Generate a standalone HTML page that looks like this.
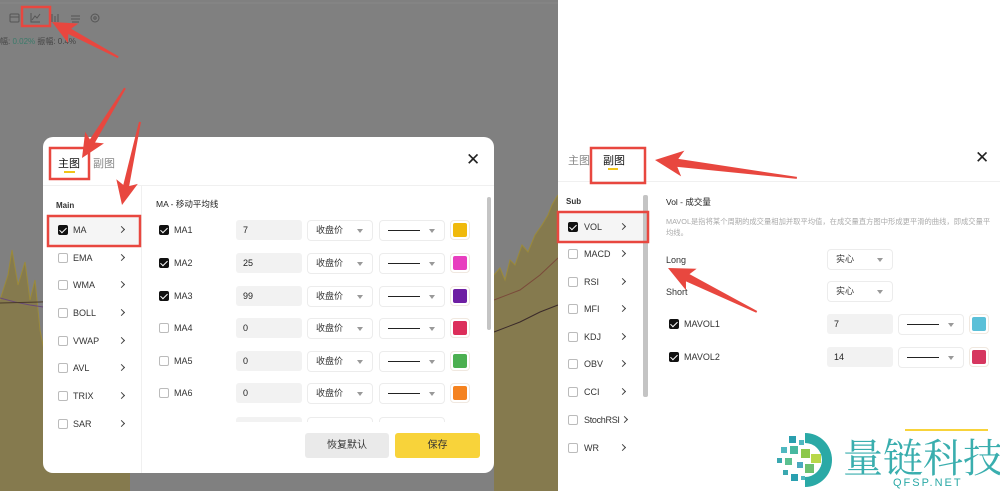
<!DOCTYPE html>
<html><head><meta charset="utf-8"><style>
*{margin:0;padding:0;box-sizing:border-box}
body{width:1000px;height:491px;overflow:hidden;position:relative;background:#808080;font-family:"Liberation Sans","Noto Sans CJK SC",sans-serif;color:#222}
.a{position:absolute}
.cb{position:absolute;width:10px;height:10px;border:1px solid #bbb;border-radius:2px;background:#fff}
.cb.on{background:#111;border-color:#111}
.cb.on:after{content:"";position:absolute;left:2px;top:0px;width:3px;height:6px;border:solid #fff;border-width:0 1.5px 1.5px 0;transform:rotate(45deg)}
.t{position:absolute;font-size:9px;color:#333;line-height:12px}
.chev{position:absolute;width:5px;height:5px;border:solid #444;border-width:1.3px 1.3px 0 0;transform:rotate(45deg)}
.inp{position:absolute;height:20px;background:#f2f2f2;border-radius:3px;font-size:9px;line-height:20px;padding-left:7px;color:#222}
.sel{position:absolute;height:21px;border:1px solid #ececec;border-radius:4px;background:#fff;font-size:9px;line-height:19px;padding-left:8px;color:#333}
.sel .ar{position:absolute;right:9px;top:8px;border:3px solid transparent;border-top:4px solid #999;border-bottom:0}
.sel .ln{position:absolute;left:8px;top:9px;width:32px;border-top:1px solid #222}
.sw{position:absolute;width:20px;height:20px;border:1px solid #f0e8e0;border-radius:4px;padding:2px;background:#fff}
.sw i{display:block;width:14px;height:14px;border-radius:2px}
</style></head><body>
<svg class="a" style="left:0;top:0" width="560" height="491">
<line x1="0" y1="3" x2="560" y2="3" stroke="#888" stroke-width="1"/>
<polygon fill="#857a4e" points="0,300 8,275 12,250 18,285 25,262 30,300 35,280 40,330 45,355 52,320 60,310 70,300 90,300 130,300 130,491 0,491"/>
<polyline fill="none" stroke="#9b8a3a" stroke-width="1" points="0,300 8,275 12,250 18,285 25,262 30,300 35,280 40,330 45,355 52,320"/>
<polyline fill="none" stroke="#6a4a7a" stroke-width="1" points="0,298 15,302 30,305 50,308 80,318 130,320"/>
<polyline fill="none" stroke="#4a3a2a" stroke-width="1" points="0,303 40,302 90,300 130,300"/>
<polygon fill="#857a4e" points="494,275 500,268 505,280 510,260 515,265 522,245 528,252 535,235 542,225 548,215 552,205 556,198 558,195 558,491 494,491"/>
<polyline fill="none" stroke="#9b8a3a" stroke-width="1" points="494,275 500,268 505,280 510,260 515,265 522,245 528,252 535,235 542,225 548,215 552,205 556,198 558,195"/>
<polyline fill="none" stroke="#7a4a3a" stroke-width="1" points="494,300 520,290 540,275 558,258"/>
<polyline fill="none" stroke="#3a2a2a" stroke-width="1" points="494,332 520,322 540,312 558,305"/>
<g fill="none" stroke="#555" stroke-width="1">
<rect x="10" y="14" width="9" height="8" rx="1"/><line x1="10" y1="17" x2="19" y2="17"/>
<polyline points="31,13 31,22 40,22"/><polyline points="32,20 35,16 37,18 40,14"/>
<path d="M52 14v8M55 16v6M58 14v8"/>
<path d="M71 16h9M71 19h9M72 22h7"/>
<circle cx="95" cy="18" r="4"/><circle cx="95" cy="18" r="1.2"/>
</g>
<rect x="22" y="7" width="28" height="19" fill="none" stroke="#e8473f" stroke-width="2.5"/>
<text x="0" y="44" font-size="8" fill="#444" font-family="Liberation Sans,Noto Sans CJK SC,sans-serif">幅: <tspan fill="#3a7a6a">0.02%</tspan> 振幅: 0.4%</text>
</svg>

<div class="a" style="left:43px;top:137px;width:451px;height:336px;background:#fff;border-radius:10px;overflow:hidden">
 <div class="a" style="left:15px;top:18px;font-size:11px;color:#111">主图</div>
 <div class="a" style="left:21px;top:34px;width:11px;height:2px;background:#f0c419"></div>
 <div class="a" style="left:50px;top:18px;font-size:11px;color:#888">副图</div>
 <div class="a" style="left:423px;top:14px;font-size:17px;color:#222;line-height:18px">✕</div>
 <div class="a" style="left:0;top:48px;width:451px;border-top:1px solid #f0f0f0"></div>
 <div class="a" style="left:98px;top:48px;height:300px;border-left:1px solid #f0f0f0"></div>
 <div class="t" style="left:13px;top:63px;font-weight:bold;font-size:8px">Main</div>
 <div class="a" style="left:5px;top:80px;width:92px;height:28px;background:#f5f5f5"></div>
</div>
<div class="cb on" style="left:58px;top:225px"></div><div class="t" style="left:73px;top:224px">MA</div><div class="chev" style="left:119px;top:227px"></div>
<div class="cb" style="left:58px;top:253px"></div><div class="t" style="left:73px;top:252px">EMA</div><div class="chev" style="left:119px;top:255px"></div>
<div class="cb" style="left:58px;top:280px"></div><div class="t" style="left:73px;top:279px">WMA</div><div class="chev" style="left:119px;top:282px"></div>
<div class="cb" style="left:58px;top:308px"></div><div class="t" style="left:73px;top:307px">BOLL</div><div class="chev" style="left:119px;top:310px"></div>
<div class="cb" style="left:58px;top:336px"></div><div class="t" style="left:73px;top:335px">VWAP</div><div class="chev" style="left:119px;top:338px"></div>
<div class="cb" style="left:58px;top:363px"></div><div class="t" style="left:73px;top:362px">AVL</div><div class="chev" style="left:119px;top:365px"></div>
<div class="cb" style="left:58px;top:391px"></div><div class="t" style="left:73px;top:390px">TRIX</div><div class="chev" style="left:119px;top:393px"></div>
<div class="cb" style="left:58px;top:419px"></div><div class="t" style="left:73px;top:418px">SAR</div><div class="chev" style="left:119px;top:421px"></div>
<div class="t" style="left:156px;top:198px;font-size:8.5px;color:#222">MA - 移动平均线</div>
<div class="a" style="left:487px;top:197px;width:4px;height:133px;background:#c4c4c4;border-radius:2px"></div>
<div class="a" style="left:141px;top:412px;width:346px;height:10px;overflow:hidden"><div class="inp" style="left:95px;top:5px;width:66px"></div><div class="sel" style="left:166px;top:5px;width:66px"></div><div class="sel" style="left:238px;top:5px;width:66px"></div></div>

<div class="cb on" style="left:159px;top:225px"></div><div class="t" style="left:174px;top:224px">MA1</div>
<div class="inp" style="left:236px;top:220px;width:66px">7</div>
<div class="sel" style="left:307px;top:220px;width:66px">收盘价<span class="ar"></span></div>
<div class="sel" style="left:379px;top:220px;width:66px"><span class="ln"></span><span class="ar"></span></div>
<div class="sw" style="left:450px;top:220px"><i style="background:#f0b90b"></i></div>

<div class="cb on" style="left:159px;top:258px"></div><div class="t" style="left:174px;top:257px">MA2</div>
<div class="inp" style="left:236px;top:253px;width:66px">25</div>
<div class="sel" style="left:307px;top:253px;width:66px">收盘价<span class="ar"></span></div>
<div class="sel" style="left:379px;top:253px;width:66px"><span class="ln"></span><span class="ar"></span></div>
<div class="sw" style="left:450px;top:253px"><i style="background:#e83fbf"></i></div>

<div class="cb on" style="left:159px;top:291px"></div><div class="t" style="left:174px;top:290px">MA3</div>
<div class="inp" style="left:236px;top:286px;width:66px">99</div>
<div class="sel" style="left:307px;top:286px;width:66px">收盘价<span class="ar"></span></div>
<div class="sel" style="left:379px;top:286px;width:66px"><span class="ln"></span><span class="ar"></span></div>
<div class="sw" style="left:450px;top:286px"><i style="background:#6e1fa3"></i></div>

<div class="cb" style="left:159px;top:323px"></div><div class="t" style="left:174px;top:322px">MA4</div>
<div class="inp" style="left:236px;top:318px;width:66px">0</div>
<div class="sel" style="left:307px;top:318px;width:66px">收盘价<span class="ar"></span></div>
<div class="sel" style="left:379px;top:318px;width:66px"><span class="ln"></span><span class="ar"></span></div>
<div class="sw" style="left:450px;top:318px"><i style="background:#dc2e5a"></i></div>

<div class="cb" style="left:159px;top:356px"></div><div class="t" style="left:174px;top:355px">MA5</div>
<div class="inp" style="left:236px;top:351px;width:66px">0</div>
<div class="sel" style="left:307px;top:351px;width:66px">收盘价<span class="ar"></span></div>
<div class="sel" style="left:379px;top:351px;width:66px"><span class="ln"></span><span class="ar"></span></div>
<div class="sw" style="left:450px;top:351px"><i style="background:#4caf50"></i></div>

<div class="cb" style="left:159px;top:388px"></div><div class="t" style="left:174px;top:387px">MA6</div>
<div class="inp" style="left:236px;top:383px;width:66px">0</div>
<div class="sel" style="left:307px;top:383px;width:66px">收盘价<span class="ar"></span></div>
<div class="sel" style="left:379px;top:383px;width:66px"><span class="ln"></span><span class="ar"></span></div>
<div class="sw" style="left:450px;top:383px"><i style="background:#f5821f"></i></div>

<div class="a" style="left:305px;top:433px;width:84px;height:25px;background:#eaeaea;border-radius:3px;font-size:10px;line-height:25px;text-align:center;color:#333">恢复默认</div>
<div class="a" style="left:395px;top:433px;width:85px;height:25px;background:#f8d33a;border-radius:3px;font-size:10px;line-height:25px;text-align:center;color:#333">保存</div>

<div class="a" style="left:558px;top:0;width:442px;height:491px;background:#fff">
 <div class="a" style="left:0;top:181px;width:442px;border-top:1px solid #f0f0f0"></div>
 <div class="a" style="left:10px;top:152px;font-size:11px;color:#888">主图</div>
 <div class="a" style="left:45px;top:152px;font-size:11px;color:#111">副图</div>
 <div class="a" style="left:50px;top:168px;width:10px;height:2px;background:#f0c419"></div>
 <div class="a" style="left:417px;top:149px;font-size:17px;color:#222;line-height:18px">✕</div>
 <div class="a" style="left:0;top:213px;width:90px;height:28px;background:#f5f5f5"></div>
 <div class="a" style="left:85px;top:195px;width:5px;height:202px;background:#c4c4c4;border-radius:2px"></div>
 <div class="t" style="left:8px;top:196px;font-weight:bold;font-size:8px">Sub</div>
</div>
<div class="cb on" style="left:568px;top:222px"></div><div class="t" style="left:584px;top:221px">VOL</div><div class="chev" style="left:620px;top:224px"></div>
<div class="cb" style="left:568px;top:249px"></div><div class="t" style="left:584px;top:248px">MACD</div><div class="chev" style="left:620px;top:251px"></div>
<div class="cb" style="left:568px;top:277px"></div><div class="t" style="left:584px;top:276px">RSI</div><div class="chev" style="left:620px;top:279px"></div>
<div class="cb" style="left:568px;top:304px"></div><div class="t" style="left:584px;top:303px">MFI</div><div class="chev" style="left:620px;top:306px"></div>
<div class="cb" style="left:568px;top:332px"></div><div class="t" style="left:584px;top:331px">KDJ</div><div class="chev" style="left:620px;top:334px"></div>
<div class="cb" style="left:568px;top:359px"></div><div class="t" style="left:584px;top:358px">OBV</div><div class="chev" style="left:620px;top:361px"></div>
<div class="cb" style="left:568px;top:387px"></div><div class="t" style="left:584px;top:386px">CCI</div><div class="chev" style="left:620px;top:389px"></div>
<div class="cb" style="left:568px;top:415px"></div><div class="t" style="left:584px;top:414px;letter-spacing:-0.3px">StochRSI</div><div class="chev" style="left:622px;top:417px"></div>
<div class="cb" style="left:568px;top:443px"></div><div class="t" style="left:584px;top:442px">WR</div><div class="chev" style="left:620px;top:445px"></div>

<div class="t" style="left:666px;top:196px;font-size:8.5px;color:#222">Vol - 成交量</div>
<div class="t" style="left:666px;top:216px;font-size:7.3px;color:#aaa;width:325px;line-height:11px">MAVOL是指将某个周期的成交量相加并取平均值，在成交量直方图中形成更平滑的曲线，即成交量平均线。</div>
<div class="t" style="left:666px;top:254px">Long</div>
<div class="t" style="left:666px;top:286px">Short</div>
<div class="sel" style="left:827px;top:249px;width:66px">实心<span class="ar"></span></div>
<div class="sel" style="left:827px;top:281px;width:66px">实心<span class="ar"></span></div>
<div class="cb on" style="left:669px;top:319px"></div><div class="t" style="left:684px;top:318px">MAVOL1</div>
<div class="inp" style="left:827px;top:314px;width:66px">7</div>
<div class="sel" style="left:898px;top:314px;width:66px"><span class="ln"></span><span class="ar"></span></div>
<div class="sw" style="left:969px;top:314px"><i style="background:#5bc0d8"></i></div>
<div class="cb on" style="left:669px;top:352px"></div><div class="t" style="left:684px;top:351px">MAVOL2</div>
<div class="inp" style="left:827px;top:347px;width:66px">14</div>
<div class="sel" style="left:898px;top:347px;width:66px"><span class="ln"></span><span class="ar"></span></div>
<div class="sw" style="left:969px;top:347px"><i style="background:#d6365f"></i></div>
<div class="a" style="left:905px;top:429px;width:83px;height:2px;background:#f8d33a"></div>

<svg class="a" style="left:775px;top:430px" width="225" height="61">
<path d="M30 3 A26 26 0 0 1 30 57 L30 47 A16 16 0 0 0 30 13 Z" fill="#2aa9a6"/>
<g>
<rect x="14" y="6" width="7" height="7" fill="#2a9fae"/><rect x="24" y="10" width="5" height="5" fill="#4fb8c0"/>
<rect x="6" y="17" width="6" height="6" fill="#4fb8c0"/><rect x="15" y="16" width="8" height="8" fill="#48b8a0"/><rect x="26" y="19" width="9" height="9" fill="#8cc84b"/>
<rect x="36" y="24" width="10" height="9" fill="#b8d84a"/><rect x="2" y="28" width="5" height="5" fill="#3aa8b0"/><rect x="10" y="28" width="7" height="7" fill="#5cc090"/>
<rect x="22" y="32" width="6" height="6" fill="#4aa9c0"/><rect x="30" y="34" width="9" height="9" fill="#6cc070"/>
<rect x="8" y="40" width="5" height="5" fill="#3aa8b0"/><rect x="16" y="44" width="7" height="7" fill="#2aa0b0"/><rect x="26" y="46" width="4" height="4" fill="#4fb8c0"/>
</g>
<text x="68" y="42" font-size="40" fill="#3aaeae" font-family="Noto Serif CJK SC,Noto Sans CJK SC,serif">量链科技</text>
<text x="118" y="56" font-size="11" letter-spacing="2" fill="#2aa9a6" font-family="Liberation Sans,sans-serif">QFSP.NET</text>
</svg>

<svg class="a" style="left:0;top:0" width="1000" height="491">
<g fill="none" stroke="#e8473f" stroke-width="2.5">
<rect x="50" y="148" width="39" height="31"/>
<rect x="48" y="216" width="92" height="30"/>
<rect x="591" y="148" width="54" height="35"/>
<rect x="558" y="212" width="90" height="30"/>
</g>
<g fill="#e8473f">
<polygon transform="translate(52,22) rotate(28)" points="0,0 24,-11 20,-3 75,-1 75,1 20,3 24,11"/>
<polygon transform="translate(82,158) rotate(-58.4)" points="0,0 24,-11 20,-3 82,-1 82,1 20,3 24,11"/>
<polygon transform="translate(122,205) rotate(-77.8)" points="0,0 24,-11 20,-3 85,-1 85,1 20,3 24,11"/>
<polygon transform="translate(655,160) rotate(7.2)" points="0,0 28,-13 23,-4 143,-1 143,1 23,4 28,13"/>
<polygon transform="translate(668,268) rotate(26.3)" points="0,0 26,-12 22,-4 99,-1 99,1 22,4 26,12"/>
</g>
</svg>
</body></html>
